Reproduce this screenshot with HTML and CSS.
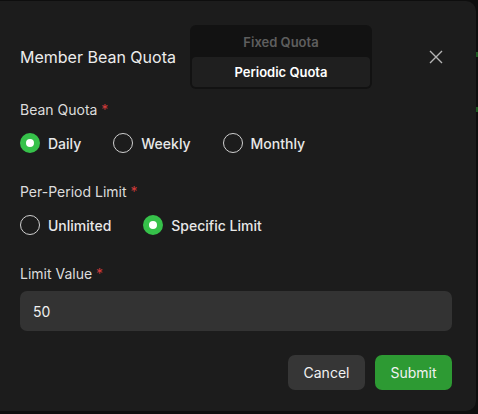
FILE: index.html
```html
<!DOCTYPE html>
<html lang="en">
<head>
  <meta charset="UTF-8">
  <meta name="viewport" content="width=device-width, initial-scale=1.0">
  <title>Member Bean Quota</title>
  <link rel="stylesheet" href="styles.css">
</head>
<body>
  <div class="backdrop">
    <div class="dialog">
      <div class="dialog-header">
        <h2 class="title">Member Bean Quota</h2>
        <div class="segmented">
          <div class="segment">Fixed Quota</div>
          <div class="segment active">Periodic Quota</div>
        </div>
        <button class="close" aria-label="Close">
          <svg width="14" height="14" viewBox="0 0 14 14">
            <path d="M1 1 L13 13 M13 1 L1 13" stroke="#b5b5b5" stroke-width="1.4" fill="none"/>
          </svg>
        </button>
      </div>

      <div class="field">
        <div class="label">Bean Quota <span class="req">*</span></div>
        <div class="radio-group">
          <label class="radio checked"><span class="dot"></span>Daily</label>
          <label class="radio"><span class="dot"></span>Weekly</label>
          <label class="radio"><span class="dot"></span>Monthly</label>
        </div>
      </div>

      <div class="field">
        <div class="label">Per-Period Limit <span class="req">*</span></div>
        <div class="radio-group">
          <label class="radio"><span class="dot"></span>Unlimited</label>
          <label class="radio checked"><span class="dot"></span>Specific Limit</label>
        </div>
      </div>

      <div class="field">
        <div class="label">Limit Value <span class="req">*</span></div>
        <input class="input" type="text" value="50">
      </div>

      <div class="footer">
        <button class="btn btn-cancel">Cancel</button>
        <button class="btn btn-submit">Submit</button>
      </div>
    </div>
    <div class="peek">
      <span class="peek-bar"></span>
      <span class="peek-bar"></span>
    </div>
  </div>
</body>
</html>
```

FILE: styles.css
```css
body {
  margin: 0;
  padding: 0;
  background-color: #0e0e0e;
  font-family: Inter, "Noto Sans", sans-serif;
  color: #e6e6e6;
}

.backdrop {
  display: flex;
  height: 414px;
  overflow: hidden;
}

.dialog {
  width: 476px;
  height: 410px;
  margin-top: 1px;
  box-sizing: border-box;
  padding: 24px 24px 0 20px;
  background: #1c1c1c;
  border-radius: 0 10px 10px 0;
  flex-shrink: 0;
}

.dialog-header {
  display: flex;
  align-items: center;
  height: 64px;
}

.title {
  margin: 0;
  font-size: 16px;
  font-weight: 400;
  color: #ececec;
  width: 170px;
}

.segmented {
  display: flex;
  flex-direction: column;
  width: 178px;
  padding: 2px;
  background: #121212;
  border-radius: 6px;
}

.segment {
  height: 30px;
  line-height: 30px;
  text-align: center;
  font-size: 13px;
  font-weight: 600;
  color: #5e5e5e;
}

.segment.active {
  background: #1f1f1f;
  color: #ffffff;
  border-radius: 4px;
}

.close {
  margin-left: auto;
  margin-right: 9px;
  background: none;
  border: none;
  padding: 0;
  width: 14px;
  height: 14px;
  display: flex;
  cursor: pointer;
}

.field {
  margin-top: 12px;
}

.label {
  font-size: 14px;
  color: #dcdcdc;
  line-height: 18px;
}

.req {
  color: #d23a3a;
}

.radio-group {
  display: flex;
  gap: 32px;
  margin-top: 14px;
  margin-bottom: 30px;
}

.radio {
  display: flex;
  align-items: center;
  gap: 8px;
  font-size: 14px;
  font-weight: 500;
  color: #e8e8e8;
}

.dot {
  width: 20px;
  height: 20px;
  box-sizing: border-box;
  border: 1.5px solid #d0d0d0;
  border-radius: 50%;
}

.radio.checked .dot {
  border: 6px solid #36c14a;
  background: #ffffff;
}

.input {
  display: block;
  width: 432px;
  height: 40px;
  margin-top: 8px;
  box-sizing: border-box;
  padding: 0 13px;
  background: #333333;
  border: none;
  border-radius: 7px;
  color: #f0f0f0;
  font-family: inherit;
  font-size: 14px;
}

.footer {
  display: flex;
  justify-content: flex-end;
  gap: 10px;
  width: 432px;
  margin-top: 24px;
}

.btn {
  width: 77px;
  height: 35px;
  border: none;
  border-radius: 7px;
  font-family: inherit;
  font-size: 14px;
  color: #f2f2f2;
  cursor: pointer;
}

.btn-cancel {
  background: #363636;
}

.btn-submit {
  background: #2d9a33;
}

.peek {
  display: flex;
  flex-direction: column;
  gap: 50px;
  padding-top: 52px;
}

.peek-bar {
  display: block;
  width: 2px;
  height: 5px;
  background: #1f5a22;
}
```
